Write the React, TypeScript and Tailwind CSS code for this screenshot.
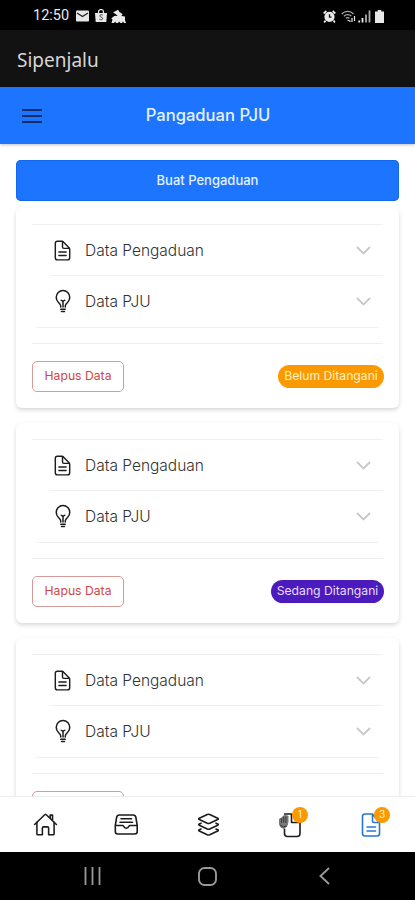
import type { ReactNode } from 'react';
import { IoBulbOutline, IoDocumentTextOutline, IoHomeOutline } from 'react-icons/io5';

interface Report {
  id: number;
  status?: string;
  badgeClass?: string;
}

const reports: Report[] = [
  { id: 1, status: 'Belum Ditangani', badgeClass: 'w-[106px] bg-[#fb9902] text-[#fff2c4]' },
  { id: 2, status: 'Sedang Ditangani', badgeClass: 'w-[113px] bg-[#4c1bbd] text-[#e8dcff]' },
  { id: 3 },
];

function StatusBar() {
  return (
    <div className="flex h-[30px] shrink-0 items-center bg-black pl-[33px] pr-[31px] pt-0.5 text-[#e8e8e8]">
      <span className="w-[38px] whitespace-nowrap font-[Roboto] text-[14.5px] leading-none">12:50</span>
      {/* Mail */}
      <svg className="ml-[5px]" width="13" height="12" viewBox="0 0 13 12">
        <rect y="0.5" width="13" height="11" rx="1" fill="currentColor" />
        <path d="M1 3l5.5 3.5L12 3" fill="none" stroke="#222" strokeWidth="1.3" />
      </svg>
      {/* Shopping bag */}
      <svg className="ml-[6px]" width="12" height="14" viewBox="0 0 12 14">
        <path d="M3.5 4V3a2.5 2.5 0 015 0v1" fill="none" stroke="currentColor" strokeWidth="1.2" />
        <path d="M0 4h12l-.7 9H.7z" fill="currentColor" />
        <path d="M7.7 6.2C6.5 5.2 4.7 5.6 4.8 7c.1 1.2 2.8.9 2.8 2.5 0 1.4-2 1.7-3.3.6" fill="none" stroke="#333" strokeWidth="0.9" />
      </svg>
      {/* Animal silhouette */}
      <svg className="ml-[4px]" width="15" height="15" viewBox="0 0 15 15" fill="currentColor">
        <path d="M2 3.5L7 .8l1.5 2.2 3 2-1 2 3.5.5V11l1 3h-2l-1-1.5-1 1.500h-1.500L8 12.500 7 14H5l-.8-1.500L3 14H.5l1-3.500L.2 9.500l3-2.500 3.500-.3L4.500 5z" />
      </svg>
      {/* Alarm */}
      <svg className="ml-auto" width="13" height="13" viewBox="0 0 13 13">
        <path d="M.7 3.5L3.3 1M12.3 3.5L9.7 1M2.5 10.500l-1.300 2M10.500 10.500l1.300 2" stroke="currentColor" strokeWidth="1.8" />
        <circle cx="6.5" cy="6.8" r="5.1" fill="currentColor" />
        <path d="M6.5 4.200v3h2" fill="none" stroke="#111" strokeWidth="1.3" />
      </svg>
      {/* Wifi */}
      <svg className="ml-[5px]" width="16" height="13" viewBox="0 0 16 13" fill="none" stroke="#aaa" strokeWidth="1.2">
        <path d="M.7 4C4 .6 9.500.6 12.500 4M2.800 6.200c2.300-2.200 5.500-2.200 7.600 0M4.800 8.300c1.200-1 2.500-1 3.600 0" />
        <path d="M6.600 10l3 1.500M11 12V8M13.500 6v5" stroke="#e8e8e8" />
      </svg>
      {/* Signal */}
      <svg className="ml-[1px]" width="13" height="13" viewBox="0 0 13 13" stroke="currentColor" strokeWidth="1.8">
        <path d="M1.200 12.500v-2M4.500 12.500V8" />
        <path d="M8 12.500V4.500M11.500 12.500V.5" stroke="#aaa" />
      </svg>
      {/* Battery */}
      <svg className="ml-[4px]" width="9" height="13" viewBox="0 0 9 13" fill="currentColor">
        <path d="M2.700 0h3.600v1.500H9V13H0V1.500h2.700z" />
      </svg>
    </div>
  );
}

function AccordionRow({ icon, label }: { icon: ReactNode; label: string }) {
  return (
    <div className="flex h-full items-center pl-[21px] pr-3 pt-px">
      <span className="w-[32px] text-[#1c1c1c]">{icon}</span>
      <span className="pt-px text-[15.5px] font-light text-[#333]">{label}</span>
      <svg className="ml-auto" width="15" height="9" viewBox="0 0 15 9" fill="none" stroke="#c8c8c8" strokeWidth="1.8">
        <path d="M1 1l6.500 6.500L14 1" />
      </svg>
    </div>
  );
}

function ReportCard({ report }: { report: Report }) {
  return (
    <div className="h-[200px] shrink-0 rounded-md bg-white px-4 pt-4 shadow-[0_2px_4px_rgba(0,0,0,0.16)]">
      <div className="h-[51px] border-t border-[#f0f0f0]">
        <AccordionRow icon={<IoDocumentTextOutline size={23} className="-ml-0.5" />} label="Data Pengaduan" />
      </div>
      <div className="h-[52px]">
        <div className="ml-[18px] border-t border-[#f0f0f0]" />
        <div className="h-[49px]">
          <AccordionRow icon={<IoBulbOutline size={24} className="-ml-0.5" />} label="Data PJU" />
        </div>
      </div>
      <div className="mx-1 h-4 border-t border-[#f0f0f0]" />
      <div className="border-t border-[#eee]" />
      <div className="-mr-px mt-[17px] flex items-center justify-between">
        <button className="h-[31px] w-[92px] rounded-[5px] border border-[#d69a99] text-[12.2px] text-[#cf4744]">
          Hapus Data
        </button>
        {report.status && (
          <span className={`flex h-[23px] items-center justify-center whitespace-nowrap rounded-full text-[12.2px] ${report.badgeClass}`}>
            {report.status}
          </span>
        )}
      </div>
    </div>
  );
}

function CountBadge({ count }: { count: number }) {
  return (
    <span className="absolute -top-[6px] left-[13px] flex h-4 w-4 items-center justify-center rounded-full bg-[#fb9902] text-[10px] text-[#fff2c4]">
      {count}
    </span>
  );
}

function TabBar() {
  return (
    <nav className="flex h-[56px] shrink-0 items-center justify-between border-t border-[#ededed] bg-white pl-[33px] pr-[30px]">
      <IoHomeOutline size={25} className="text-[#1c1c1c]" />
      <svg className="-ml-px" width="25" height="24" viewBox="0 0 25 24" fill="none" stroke="#1c1c1c" strokeWidth="1.6" strokeLinecap="round" strokeLinejoin="round">
        <path d="M1.300 12.500L2.600 4.500Q3 2 5.500 2h13.500q2.500 0 2.900 2.500l1.300 8M1.300 12.500h7q1 0 1.300.8c1 2.600 4.300 2.600 5.300 0q.3-.8 1.300-.8h7v6q0 2.500-2.500 2.500H3.800q-2.500 0-2.500-2.500zM7 5.800h10.500M6 9.200h12.500" />
      </svg>
      <svg className="-ml-px" width="25" height="24" viewBox="0 0 25 24" fill="none" stroke="#1c1c1c" strokeWidth="1.6" strokeLinecap="round" strokeLinejoin="round">
        <path d="M11.300 1.500q1.200-.5 2.400 0l8 3.800q1.200.6 0 1.200l-8 3.800q-1.200.5-2.400 0l-8-3.800q-1.200-.6 0-1.200zM5 10.200l-1.700.8q-1.200.6 0 1.200l8 3.800q1.200.5 2.400 0l8-3.800q1.200-.6 0-1.200L20 10.200M5 16l-1.700.8q-1.200.6 0 1.200l8 3.800q1.200.5 2.400 0l8-3.800q1.200-.6 0-1.200L20 16" />
      </svg>
      {/* Report with a hand over its corner */}
      <div className="relative left-px h-6 w-[25px]">
        <svg width="25" height="25" viewBox="0 0 25 25" fill="none" stroke="#1c1c1c" strokeWidth="1.6" strokeLinejoin="round">
          <path d="M5 1h7.500v8.500h8.500v11q0 3-3 3H8.500q-3 0-3-3v-5" />
          <path d="M.5 6v5.500q1 3.500 4 3.800 4-1 4.500-6V3L5 2.500 2.500 5z" fill="#777" stroke="#777" strokeWidth="1" />
          <path d="M2.500 10V5.500M4.700 9.500V3.500M6.900 10V3.500M1 12q3 3.500 7 1" stroke="#333" strokeWidth="0.9" />
        </svg>
        <CountBadge count={1} />
      </div>
      <div className="relative left-px h-6 w-[25px]">
        <svg width="25" height="25" viewBox="0 0 25 25" fill="none" stroke="#2876d5" strokeWidth="1.6" strokeLinecap="round" strokeLinejoin="round">
          <path d="M11.500 1H4Q1.500 1 1.500 3.500v17Q1.500 23 4 23h12q2.500 0 2.500-2.500V9.500h-5.500q-1.500 0-1.500-1.500zM11.500 1l7 8.500M6 14h8.500M6 18h8.500" />
        </svg>
        <CountBadge count={3} />
      </div>
    </nav>
  );
}

export default function App() {
  return (
    <div className="flex h-[900px] w-[415px] flex-col overflow-hidden bg-white font-[Inter,sans-serif]">
      <StatusBar />

      {/* App bar */}
      <div className="flex h-[57px] shrink-0 items-center bg-[#121212] pl-[17px] pt-1">
        <h1 className="font-['Noto_Sans',sans-serif] text-[19px] leading-none text-[#d6d6d6]">Sipenjalu</h1>
      </div>

      {/* Page header */}
      <header className="grid h-[57px] shrink-0 grid-cols-[1fr_auto_1fr] items-center bg-[#1d75ff] px-[22px] shadow-[0_1px_3px_rgba(0,0,0,0.25)]">
        <svg width="20" height="14" viewBox="0 0 20 14" stroke="#0b2c68" strokeWidth="1.8">
          <path d="M0 1h20M0 7h20M0 13h20" />
        </svg>
        <h2 className="pl-px text-[16.6px] font-medium text-[#e3f1ff]">Pangaduan PJU</h2>
      </header>

      <main className="flex min-h-0 flex-1 flex-col overflow-hidden px-4 pt-4">
        <button className="h-[41px] shrink-0 rounded-[5px] bg-[#1d75ff] text-[13px] font-medium text-[#e3f1ff] shadow-[inset_0_0_0_1px_#1269ec]">
          Buat Pengaduan
        </button>
        <div className="mt-[7px] flex flex-col gap-[15px]">
          {reports.map((report) => (
            <ReportCard key={report.id} report={report} />
          ))}
        </div>
      </main>

      <TabBar />

      {/* System navigation */}
      <div className="flex h-12 shrink-0 items-center justify-between bg-black pl-[84px] pr-[85px]">
        <svg width="17" height="18" viewBox="0 0 17 18" stroke="#999" strokeWidth="1.8">
          <path d="M1.500 0v18M8.500 0v18M15.500 0v18" />
        </svg>
        <svg className="mr-[5px]" width="19" height="19" viewBox="0 0 19 19" fill="none" stroke="#999" strokeWidth="1.9">
          <rect x="1" y="1" width="17" height="17" rx="5.5" />
        </svg>
        <svg width="11" height="18" viewBox="0 0 11 18" fill="none" stroke="#999" strokeWidth="1.9">
          <path d="M10 1L1.500 9l8.500 8" />
        </svg>
      </div>
    </div>
  );
}
